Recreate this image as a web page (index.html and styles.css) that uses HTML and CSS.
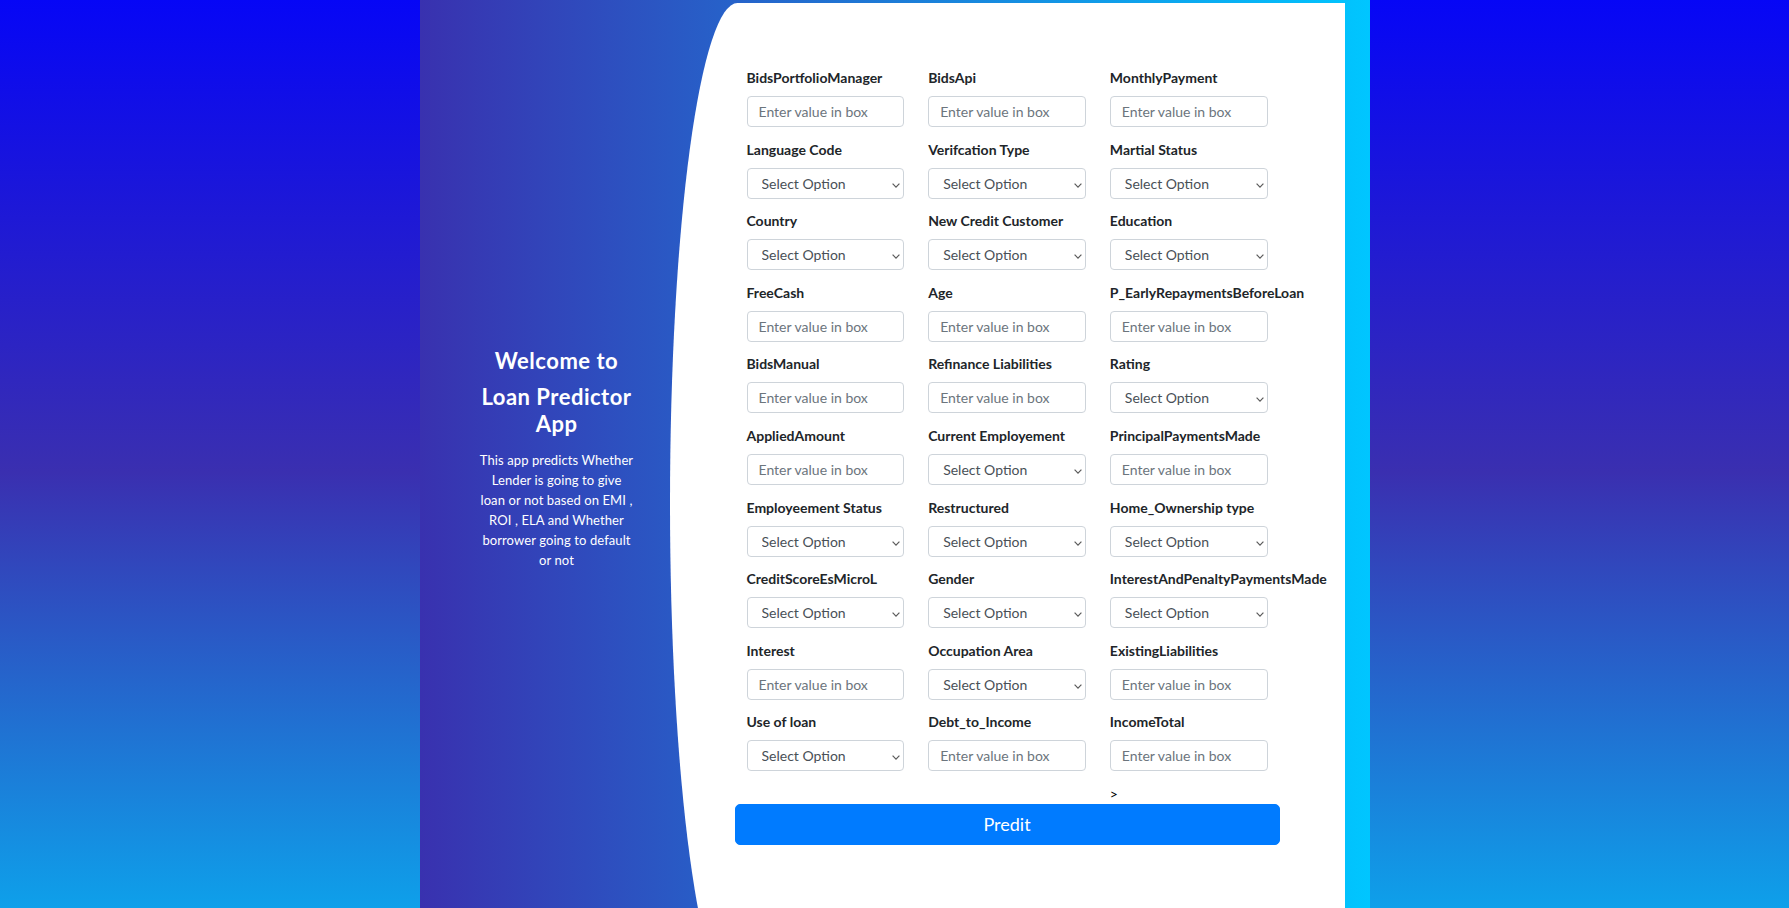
FILE: index.html
```html
<!DOCTYPE html>
<html lang="en">
<head>
<meta charset="utf-8">
<title>Loan Predictor App</title>
<link rel="stylesheet" href="styles.css">
</head>
<body>
<div class="page">
  <aside class="intro">
    <h1 class="intro-title">Welcome to</h1>
    <h1 class="intro-title">Loan Predictor App</h1>
    <p class="intro-text">This app predicts Whether<br>Lender is going to give<br>loan or not based on EMI ,<br>ROI , ELA and Whether<br>borrower going to default<br>or not</p>
  </aside>
  <main class="card">
    <form class="form-grid">
      <div class="field"><label>BidsPortfolioManager</label><input class="control" placeholder="Enter value in box"></div>
      <div class="field"><label>BidsApi</label><input class="control" placeholder="Enter value in box"></div>
      <div class="field"><label>MonthlyPayment</label><input class="control" placeholder="Enter value in box"></div>

      <div class="field"><label>Language Code</label><div class="select-wrap"><select class="control select"><option>Select Option</option></select><svg class="chev" width="8" height="5" viewBox="0 0 8 5"><path d="M0.6 0.7 L4 4.1 L7.4 0.7" fill="none" stroke="#5a5a5a" stroke-width="1.2"/></svg></div></div>
      <div class="field"><label>Verifcation Type</label><div class="select-wrap"><select class="control select"><option>Select Option</option></select><svg class="chev" width="8" height="5" viewBox="0 0 8 5"><path d="M0.6 0.7 L4 4.1 L7.4 0.7" fill="none" stroke="#5a5a5a" stroke-width="1.2"/></svg></div></div>
      <div class="field"><label>Martial Status</label><div class="select-wrap"><select class="control select"><option>Select Option</option></select><svg class="chev" width="8" height="5" viewBox="0 0 8 5"><path d="M0.6 0.7 L4 4.1 L7.4 0.7" fill="none" stroke="#5a5a5a" stroke-width="1.2"/></svg></div></div>

      <div class="field"><label>Country</label><div class="select-wrap"><select class="control select"><option>Select Option</option></select><svg class="chev" width="8" height="5" viewBox="0 0 8 5"><path d="M0.6 0.7 L4 4.1 L7.4 0.7" fill="none" stroke="#5a5a5a" stroke-width="1.2"/></svg></div></div>
      <div class="field"><label>New Credit Customer</label><div class="select-wrap"><select class="control select"><option>Select Option</option></select><svg class="chev" width="8" height="5" viewBox="0 0 8 5"><path d="M0.6 0.7 L4 4.1 L7.4 0.7" fill="none" stroke="#5a5a5a" stroke-width="1.2"/></svg></div></div>
      <div class="field"><label>Education</label><div class="select-wrap"><select class="control select"><option>Select Option</option></select><svg class="chev" width="8" height="5" viewBox="0 0 8 5"><path d="M0.6 0.7 L4 4.1 L7.4 0.7" fill="none" stroke="#5a5a5a" stroke-width="1.2"/></svg></div></div>

      <div class="field"><label>FreeCash</label><input class="control" placeholder="Enter value in box"></div>
      <div class="field"><label>Age</label><input class="control" placeholder="Enter value in box"></div>
      <div class="field"><label>P_EarlyRepaymentsBeforeLoan</label><input class="control" placeholder="Enter value in box"></div>

      <div class="field"><label>BidsManual</label><input class="control" placeholder="Enter value in box"></div>
      <div class="field"><label>Refinance Liabilities</label><input class="control" placeholder="Enter value in box"></div>
      <div class="field"><label>Rating</label><div class="select-wrap"><select class="control select"><option>Select Option</option></select><svg class="chev" width="8" height="5" viewBox="0 0 8 5"><path d="M0.6 0.7 L4 4.1 L7.4 0.7" fill="none" stroke="#5a5a5a" stroke-width="1.2"/></svg></div></div>

      <div class="field"><label>AppliedAmount</label><input class="control" placeholder="Enter value in box"></div>
      <div class="field"><label>Current Employement</label><div class="select-wrap"><select class="control select"><option>Select Option</option></select><svg class="chev" width="8" height="5" viewBox="0 0 8 5"><path d="M0.6 0.7 L4 4.1 L7.4 0.7" fill="none" stroke="#5a5a5a" stroke-width="1.2"/></svg></div></div>
      <div class="field"><label>PrincipalPaymentsMade</label><input class="control" placeholder="Enter value in box"></div>

      <div class="field"><label>Employeement Status</label><div class="select-wrap"><select class="control select"><option>Select Option</option></select><svg class="chev" width="8" height="5" viewBox="0 0 8 5"><path d="M0.6 0.7 L4 4.1 L7.4 0.7" fill="none" stroke="#5a5a5a" stroke-width="1.2"/></svg></div></div>
      <div class="field"><label>Restructured</label><div class="select-wrap"><select class="control select"><option>Select Option</option></select><svg class="chev" width="8" height="5" viewBox="0 0 8 5"><path d="M0.6 0.7 L4 4.1 L7.4 0.7" fill="none" stroke="#5a5a5a" stroke-width="1.2"/></svg></div></div>
      <div class="field"><label>Home_Ownership type</label><div class="select-wrap"><select class="control select"><option>Select Option</option></select><svg class="chev" width="8" height="5" viewBox="0 0 8 5"><path d="M0.6 0.7 L4 4.1 L7.4 0.7" fill="none" stroke="#5a5a5a" stroke-width="1.2"/></svg></div></div>

      <div class="field"><label>CreditScoreEsMicroL</label><div class="select-wrap"><select class="control select"><option>Select Option</option></select><svg class="chev" width="8" height="5" viewBox="0 0 8 5"><path d="M0.6 0.7 L4 4.1 L7.4 0.7" fill="none" stroke="#5a5a5a" stroke-width="1.2"/></svg></div></div>
      <div class="field"><label>Gender</label><div class="select-wrap"><select class="control select"><option>Select Option</option></select><svg class="chev" width="8" height="5" viewBox="0 0 8 5"><path d="M0.6 0.7 L4 4.1 L7.4 0.7" fill="none" stroke="#5a5a5a" stroke-width="1.2"/></svg></div></div>
      <div class="field"><label>InterestAndPenaltyPaymentsMade</label><div class="select-wrap"><select class="control select"><option>Select Option</option></select><svg class="chev" width="8" height="5" viewBox="0 0 8 5"><path d="M0.6 0.7 L4 4.1 L7.4 0.7" fill="none" stroke="#5a5a5a" stroke-width="1.2"/></svg></div></div>

      <div class="field"><label>Interest</label><input class="control" placeholder="Enter value in box"></div>
      <div class="field"><label>Occupation Area</label><div class="select-wrap"><select class="control select"><option>Select Option</option></select><svg class="chev" width="8" height="5" viewBox="0 0 8 5"><path d="M0.6 0.7 L4 4.1 L7.4 0.7" fill="none" stroke="#5a5a5a" stroke-width="1.2"/></svg></div></div>
      <div class="field"><label>ExistingLiabilities</label><input class="control" placeholder="Enter value in box"></div>

      <div class="field"><label>Use of loan</label><div class="select-wrap"><select class="control select"><option>Select Option</option></select><svg class="chev" width="8" height="5" viewBox="0 0 8 5"><path d="M0.6 0.7 L4 4.1 L7.4 0.7" fill="none" stroke="#5a5a5a" stroke-width="1.2"/></svg></div></div>
      <div class="field"><label>Debt_to_Income</label><input class="control" placeholder="Enter value in box"></div>
      <div class="field"><label>IncomeTotal</label><input class="control" placeholder="Enter value in box"></div>

      <div class="stray">&gt;</div>
    </form>
    <button class="predict" type="button">Predit</button>
  </main>
</div>
</body>
</html>
```
FILE: styles.css
```css
html, body {
  margin: 0;
  padding: 0;
  height: 908px;
  overflow: hidden;
}

body {
  background: linear-gradient(to bottom, #0606f6 0px, #3a2fb0 472px, #0ea0ea 908px);
  font-family: Lato, "Open Sans", sans-serif;
  color: #212529;
}

.page {
  width: 950px;
  margin: 0 auto;
  box-sizing: border-box;
  padding: 3px 25px 0 0;
  min-height: 908px;
  display: flex;
  align-items: flex-start;
  background: linear-gradient(to right, #3931af, #00c6ff);
}

.intro {
  width: 250px;
  flex: none;
  box-sizing: border-box;
  padding: 344px 30px 0 54px;
  text-align: center;
  color: #fff;
}

.intro-title {
  margin: 0 0 9px;
  font-size: 22px;
  line-height: 27px;
  font-weight: 700;
  letter-spacing: 0.5px;
}

.intro-title + .intro-title {
  margin-bottom: 0;
}

.intro-text {
  margin: 13px 0 0;
  font-size: 13px;
  line-height: 20px;
  letter-spacing: 0.1px;
  white-space: nowrap;
}

.card {
  flex: 1;
  background: #fff;
  border-radius: 67.5px 0 0 67.5px / 500px 0 0 500px;
  padding: 64px 65px 158px;
}

.form-grid {
  display: grid;
  grid-template-columns: repeat(3, 1fr);
  column-gap: 24px;
  row-gap: 11.6px;
  padding: 0 12px;
  margin: 0;
}

.field {
  min-width: 0;
}

.field label {
  display: block;
  font-size: 14px;
  line-height: 21px;
  font-weight: 700;
  margin-bottom: 8px;
  white-space: nowrap;
  color: #212529;
}

.control {
  display: block;
  width: 100%;
  height: 31px;
  box-sizing: border-box;
  border: 1px solid #ced4da;
  border-radius: 4px;
  padding: 0 11px;
  font-family: Lato, "Open Sans", sans-serif;
  font-size: 14px;
  color: #495057;
  background: #fff;
  outline: none;
}

.control::placeholder {
  color: #6c757d;
  opacity: 1;
}

.select-wrap {
  position: relative;
}

.select {
  -webkit-appearance: none;
  appearance: none;
  padding: 0 20px 0 14px;
}

.chev {
  position: absolute;
  right: 4px;
  top: 15px;
  pointer-events: none;
}

.stray {
  grid-column: 3;
  font-size: 14px;
  line-height: 21px;
  color: #000;
}

.predict {
  display: block;
  width: 100%;
  box-sizing: border-box;
  border: 1px solid #007bff;
  border-radius: 5px;
  background: #007bff;
  color: #fff;
  font-family: Lato, "Open Sans", sans-serif;
  font-size: 18px;
  line-height: 27px;
  padding: 6px 12px;
  cursor: pointer;
}
```
